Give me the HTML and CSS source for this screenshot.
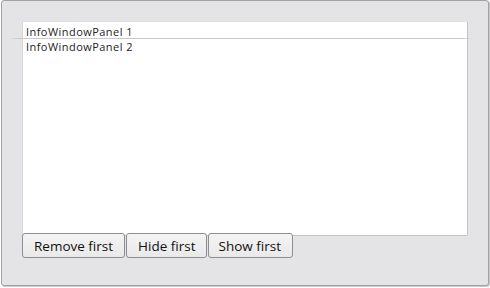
FILE: index.html
```html
<!DOCTYPE html>
<html>
<head>
<meta charset="utf-8">
<link rel="stylesheet" href="styles.css">
</head>
<body>
<div class="window">
  <div class="panel">
    <div class="item first">InfoWindowPanel 1</div>
    <div class="sep"></div>
    <div class="item">InfoWindowPanel 2</div>
  </div>
  <div class="buttons">
    <button class="btn">Remove first</button>
    <button class="btn btn-hide">Hide first</button>
    <button class="btn btn-show">Show first</button>
  </div>
</div>
</body>
</html>
```
FILE: styles.css
```css
html, body {
  margin: 0;
  padding: 0;
  background: #ffffff;
}
body {
  width: 490px;
  height: 288px;
  font-family: "Open Sans", "DejaVu Sans", sans-serif;
}
.window {
  box-sizing: border-box;
  margin: 0 0 0 1px;
  width: 488px;
  height: 286px;
  border: 1px solid #a2a2a4;
  border-radius: 3px;
  background: #e4e4e6;
  padding: 20px 20px 0 20px;
  display: flex;
  flex-direction: column;
  box-shadow: 1px 1px 0 #c8c8c8;
}
.panel {
  box-sizing: border-box;
  width: 446px;
  height: 215px;
  background: #ffffff;
  border: 1px solid #c4c4c6;
  border-top-color: #e0e0e2;
  border-left-color: #d6d6d8;
  border-radius: 2px;
  padding: 3px 0 0 3px;
}
.item {
  font-size: 11px;
  letter-spacing: 0.45px;
  line-height: 14px;
  color: #222;
  height: 14px;
}
.item.first {
  height: 13px;
}
.sep {
  height: 1px;
  margin: 0 -6px 1px -17px;
  background: linear-gradient(to right, rgba(200,200,202,0), #c9c9cb 10px, #c9c9cb calc(100% - 10px), rgba(200,200,202,0));
}
.buttons {
  display: flex;
  gap: 1px;
  margin-top: -3px;
}
.btn {
  box-sizing: border-box;
  height: 25px;
  padding: 0 11px;
  font-family: "Open Sans", "DejaVu Sans", sans-serif;
  font-size: 13.5px;
  color: #111;
  background: linear-gradient(#f4f4f4, #e9e9e9);
  border: 1px solid #8e8e90;
  border-radius: 3px;
  line-height: 22px;
}
.btn-hide {
  padding: 0 10px 0 11px;
}
.btn-show {
  padding: 0 11px 0 10px;
}
```
